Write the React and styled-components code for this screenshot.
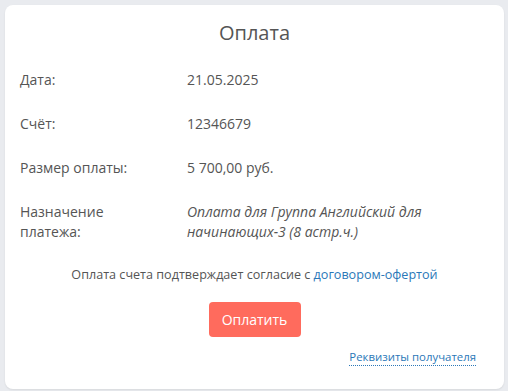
import React from 'react';
import styled, { createGlobalStyle } from 'styled-components';

const GlobalStyle = createGlobalStyle`
  html, body {
    margin: 0;
    padding: 0;
    background: #e9ebef;
  }
  body {
    font-family: "Open Sans", "Liberation Sans", sans-serif;
    color: #4f4f4f;
  }
`;

const Page = styled.div`
  padding: 5px 4px 4px 5px;
`;

const Card = styled.div`
  background: #fff;
  border-radius: 8px;
  box-shadow: 0 1px 2px rgba(0, 0, 0, 0.08);
  padding: 14px 28px 23px 15px;
  display: flex;
  flex-direction: column;
`;

const Title = styled.h2`
  margin: 0 0 23px 13px;
  font-size: 20px;
  line-height: 28px;
  font-weight: 400;
  text-align: center;
  color: #555;
`;

const Rows = styled.div`
  display: grid;
  grid-template-columns: 167px 1fr;
  row-gap: 24px;
  font-size: 14px;
  line-height: 20px;
`;

const Label = styled.div`
  color: #555;
`;

const Value = styled.div`
  color: #555;
  font-style: ${({ italic }) => (italic ? 'italic' : 'normal')};
`;

const Note = styled.p`
  margin: 24px 0 0 13px;
  font-size: 12.6px;
  line-height: 18px;
  text-align: center;
  color: #555;
`;

const Link = styled.a`
  color: #2b78b8;
  text-decoration: none;
`;

const PayButton = styled.button`
  align-self: center;
  margin: 18px 0 0 13px;
  width: 92px;
  height: 35px;
  border: none;
  border-radius: 4px;
  background: #ff6b5d;
  color: #fff;
  font-family: inherit;
  font-size: 14px;
`;

const Footer = styled.div`
  display: flex;
  justify-content: flex-end;
  margin-top: 12px;
`;

const DottedLink = styled.a`
  font-size: 11.4px;
  line-height: 16px;
  color: #2b78b8;
  text-decoration: none;
  border-bottom: 1px dotted #2b78b8;
`;

const rows = [
  { label: 'Дата:', value: '21.05.2025' },
  { label: 'Счёт:', value: '12346679' },
  { label: 'Размер оплаты:', value: '5 700,00 руб.' },
  {
    label: (
      <>
        Назначение
        <br />
        платежа:
      </>
    ),
    value: 'Оплата для Группа Английский для начинающих-3 (8 астр.ч.)',
    italic: true,
  },
];

export default function App() {
  return (
    <>
      <GlobalStyle />
      <Page>
        <Card>
          <Title>Оплата</Title>
          <Rows>
            {rows.map((r, i) => (
              <React.Fragment key={i}>
                <Label>{r.label}</Label>
                <Value italic={r.italic}>{r.value}</Value>
              </React.Fragment>
            ))}
          </Rows>
          <Note>
            Оплата счета подтверждает согласие с <Link href="#">договором-офертой</Link>
          </Note>
          <PayButton>Оплатить</PayButton>
          <Footer>
            <DottedLink href="#">Реквизиты получателя</DottedLink>
          </Footer>
        </Card>
      </Page>
    </>
  );
}
